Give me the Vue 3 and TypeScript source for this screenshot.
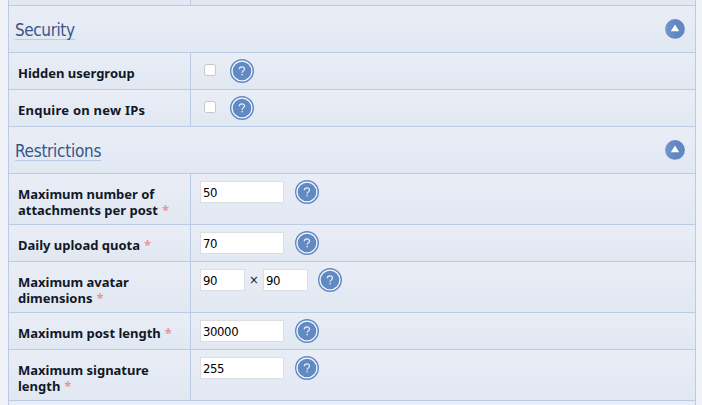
<script setup lang="ts">
interface Row {
  lines: string[]
  kind: 'check' | 'text' | 'pair'
  values?: string[]
  required?: boolean
  loose?: boolean
}
interface Section {
  title: string
  rows: Row[]
}

const sections: Section[] = [
  {
    title: 'Security',
    rows: [
      { lines: ['Hidden usergroup'], kind: 'check' },
      { lines: ['Enquire on new IPs'], kind: 'check', loose: true },
    ],
  },
  {
    title: 'Restrictions',
    rows: [
      { lines: ['Maximum number of', 'attachments per post'], kind: 'text', values: ['50'], required: true },
      { lines: ['Daily upload quota'], kind: 'text', values: ['70'], required: true },
      { lines: ['Maximum avatar', 'dimensions'], kind: 'pair', values: ['90', '90'], required: true },
      { lines: ['Maximum post length'], kind: 'text', values: ['30000'], required: true },
      { lines: ['Maximum signature', 'length'], kind: 'text', values: ['255'], required: true },
    ],
  },
]
</script>

<template>
  <main class="page">
    <div class="form">
      <div class="row stub"><div class="label"></div></div>
      <template v-for="section in sections" :key="section.title">
        <header class="heading">
          <h2 :class="['title', section.title.toLowerCase()]">{{ section.title }}</h2>
          <svg class="toggle" viewBox="0 0 20 20">
            <defs>
              <linearGradient id="disc" x1="0" x2="1">
                <stop offset="0" stop-color="#7497cd" />
                <stop offset="0.55" stop-color="#5f87c2" />
                <stop offset="1" stop-color="#6288c1" />
              </linearGradient>
            </defs>
            <circle cx="10" cy="9.9" r="9.9" fill="url(#disc)" />
            <path d="M10 5.6 L14.2 12.2 H5.8 Z" fill="#fff" />
          </svg>
        </header>
        <div v-for="row in section.rows" :key="row.lines[0]" :class="['row', { tall: row.lines.length > 1 }]">
          <div :class="['label', { loose: row.loose }]">
            <div v-for="(line, i) in row.lines" :key="line" class="line">
              <span>{{ line }}</span>
              <span v-if="row.required && i === row.lines.length - 1" class="star">*</span>
            </div>
          </div>
          <div :class="['field', row.kind]">
            <input v-if="row.kind === 'check'" type="checkbox" class="box" />
            <template v-for="(value, i) in row.values" :key="i">
              <span v-if="i" class="times">×</span>
              <input type="text" class="input" :value="value" />
            </template>
            <svg class="help" viewBox="0 0 24 24">
              <circle cx="12" cy="12" r="11.3" fill="#f4f8fd" stroke="#6189c3" stroke-width="1.4" />
              <circle cx="12" cy="12" r="9.3" fill="#6189c2" />
              <path d="M9.3 10.2 C9.3 7.2 14.6 7.2 14.6 10.1 C14.6 11.8 12.1 11.8 12.1 13.8" fill="none" stroke="#e6eefa" stroke-width="1.25" />
              <rect x="11.4" y="14.9" width="1.4" height="1.4" fill="#e6eefa" />
            </svg>
          </div>
        </div>
      </template>
      <div class="tail"></div>
    </div>
  </main>
</template>

<style>
body {
  background: #eff3f8;
}
</style>

<style scoped>
.page {
  box-sizing: border-box;
  width: 702px;
  height: 405px;
  padding: 0 6px 0 8px;
  overflow: hidden;
  background: #eff3f8;
  font-family: "Noto Sans", "Open Sans", sans-serif;
}
.form {
  border-left: 1px solid #bccbe5;
  border-right: 1px solid #bccbe5;
}
.row,
.heading {
  box-sizing: border-box;
  display: flex;
  border-bottom: 1px solid #bccbe5;
  background: linear-gradient(#e9edf6, #e1e8f2);
}
.row {
  height: 37px;
}
.row.tall {
  height: 51px;
}
.row.stub {
  height: 6px;
  background: #e2e8f2;
}
.heading {
  height: 47px;
  padding: 0 10px 0 6px;
  justify-content: space-between;
  align-items: flex-start;
}
.title {
  box-sizing: border-box;
  height: 20px;
  margin: 14px 0 0;
  border-bottom: 1px solid #bccbe5;
  color: #365688;
  font-family: "DejaVu Sans Condensed", "DejaVu Sans", sans-serif;
  font-stretch: condensed;
  font-size: 17px;
  font-weight: 400;
  letter-spacing: -0.4px;
  line-height: 20px;
}
.title.restrictions {
  letter-spacing: -0.28px;
}
.toggle {
  width: 20px;
  height: 20px;
  margin-top: 13px;
}
.label {
  box-sizing: border-box;
  width: 182px;
  padding: 12px 0 0 9px;
  border-right: 1px solid #bccbe5;
  color: #111827;
  font-size: 13px;
  font-weight: 700;
  letter-spacing: -0.01px;
}
.label.loose {
  letter-spacing: 0.24px;
}
.stub .label {
  padding: 0;
}
.line {
  display: flex;
  gap: 4px;
  height: 16px;
  line-height: 16px;
  white-space: nowrap;
}
.star {
  color: #e8959d;
}
.field {
  display: flex;
  align-items: flex-start;
  padding: 6px 0 0 9px;
}
.box {
  appearance: none;
  box-sizing: border-box;
  width: 12px;
  height: 12px;
  margin: 5px 14px 0 4px;
  border: 1px solid #c5c6ca;
  border-radius: 2.5px;
  background: #fff;
}
.input {
  box-sizing: border-box;
  width: 84px;
  height: 22px;
  margin: 1px 0 0;
  padding: 0 2px;
  border: 1px solid #dcdee2;
  background: #fff;
  color: #000;
  font-family: "DejaVu Sans Condensed", "DejaVu Sans", sans-serif;
  font-stretch: condensed;
  font-size: 13px;
  letter-spacing: -0.4px;
}
.pair .input {
  width: 45px;
}
.times {
  width: 18px;
  color: #111827;
  font-family: "DejaVu Sans Condensed", "DejaVu Sans", sans-serif;
  font-stretch: condensed;
  font-size: 13px;
  line-height: 24px;
  text-align: center;
}
.help {
  width: 24px;
  height: 24px;
}
.text .help {
  margin-left: 11px;
}
.pair .help {
  margin-left: 10px;
}
.tail {
  height: 5px;
  background: #e9edf6;
}
</style>
